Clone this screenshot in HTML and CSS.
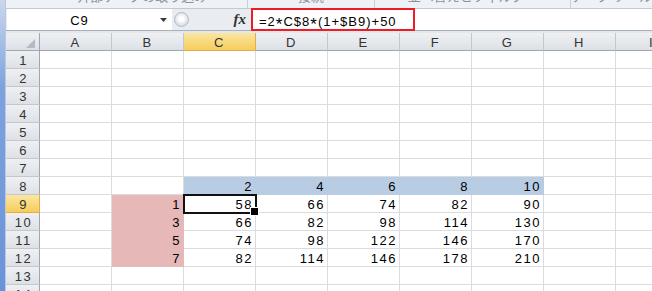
FILE: index.html
```html
<!DOCTYPE html>
<html lang="ja">
<head>
    <meta charset="UTF-8">
    <title>Book1 - Microsoft Excel</title>
    <link rel="stylesheet" href="styles.css">
</head>
<body>
    <div class="window">
        <div class="frame"></div>
        <div class="main">
            <!-- bottom edge of the ribbon, group labels cut off -->
            <div class="ribbon">
                <div class="group g1">外部データの取り込み</div>
                <div class="group g2">接続</div>
                <div class="group g3">並べ替えとフィルター</div>
                <div class="group g4">データ ツール</div>
            </div>

            <!-- formula bar -->
            <div class="formula-bar">
                <div class="name-box">
                    <span class="name">C9</span>
                    <svg class="arrow" width="7" height="4" viewBox="0 0 7 4"><polygon points="0,0 7,0 3.5,4" fill="#3a3a3a"/></svg>
                </div>
                <div class="knob"></div>
                <div class="fx">fx</div>
                <div class="field"><span class="formula">=2<span class="ast">*</span>C$8<span class="ast">*</span>(1+$B9)+50</span></div>
            </div>
            <div class="bar-gap"></div>

            <!-- sheet -->
            <div class="sheet" id="sheet"></div>
        </div>
    </div>

<script>
    var cols = ["A", "B", "C", "D", "E", "F", "G", "H", "I"];
    var values = {
        8:  [null, null, 2, 4, 6, 8, 10],
        9:  [null, 1, 58, 66, 74, 82, 90],
        10: [null, 3, 66, 82, 98, 114, 130],
        11: [null, 5, 74, 98, 122, 146, 170],
        12: [null, 7, 82, 114, 146, 178, 210]
    };
    var sheet = document.getElementById("sheet");

    function addCell(cls, text) {
        var div = document.createElement("div");
        div.className = cls;
        if (text != null) div.textContent = text;
        sheet.appendChild(div);
        return div;
    }

    // header row
    var corner = addCell("cell head corner");
    corner.innerHTML = '<svg width="9" height="9" viewBox="0 0 9 9"><polygon points="9,0 9,9 0,9" fill="#b4bac3"/></svg>';
    cols.forEach(function (c) {
        addCell("cell head col-head" + (c === "C" ? " on" : ""), c);
    });

    // rows
    for (var r = 1; r <= 14; r++) {
        addCell("cell head row-head" + (r === 9 ? " on" : ""), r);
        var row = values[r] || [];
        cols.forEach(function (c, i) {
            var cls = "cell";
            if (r === 8 && i >= 2 && i <= 6) cls += " blue";
            if (r >= 9 && r <= 12 && i === 1) cls += " pink";
            if (r === 9 && i === 2) cls += " active";
            addCell(cls, row[i]);
        });
    }
</script>
</body>
</html>
```

FILE: styles.css
```css
* {
    box-sizing: border-box;
}
body {
    margin: 0;
    width: 652px;
    height: 291px;
    overflow: hidden;
    background: #ffffff;
    font-family: "Liberation Sans", Arial, sans-serif;
    font-size: 13px;
    color: #000000;
}
.window {
    display: flex;
    height: 291px;
}
.frame {
    width: 6px;
    flex: none;
    background: linear-gradient(#cbd8ec, #7ea2de 30%, #6b93d8);
    border-right: 1px solid #b7c9e6;
}
.main {
    flex: 1;
    min-width: 0;
    overflow: hidden;
    display: flex;
    flex-direction: column;
}

/* ribbon edge */
.ribbon {
    height: 9px;
    flex: none;
    display: flex;
    align-items: flex-start;
    overflow: hidden;
    background: #eef1f5;
    border-bottom: 1px solid #c3c9d1;
    font-family: "Noto Sans CJK JP", sans-serif;
    font-size: 13px;
    color: #8d939b;
}
.group {
    height: 30px;
    margin-top: -11px;
    line-height: 14px;
    text-align: center;
    white-space: nowrap;
    border-right: 1px solid #c9cfd8;
}
.g1 {
    width: 257px;
    padding-left: 32px;
}
.g2 {
    width: 137px;
}
.g3 {
    width: 210px;
}
.g4 {
    flex: 1;
    border-right: none;
}

/* formula bar */
.formula-bar {
    height: 22px;
    flex: none;
    display: flex;
    background: #e9ecf0;
    border-bottom: 1px solid #a9b1bb;
}
.name-box {
    width: 165px;
    height: 21px;
    margin-left: 1px;
    display: flex;
    align-items: center;
    background: #ffffff;
}
.name {
    flex: 1;
    text-align: center;
    padding-right: 8px;
    padding-top: 1px;
    letter-spacing: 1px;
}
.arrow {
    margin-right: 5px;
}
.knob {
    width: 15px;
    height: 15px;
    margin: 3px 0 0 2px;
    border-radius: 50%;
    border: 1px solid #b3bac4;
    background: radial-gradient(circle at 50% 45%, #ffffff 20%, #d3d8df 80%);
}
.fx {
    width: 62px;
    padding-right: 5px;
    text-align: right;
    font-family: "Liberation Serif", serif;
    font-style: italic;
    font-weight: bold;
    font-size: 15px;
    line-height: 21px;
    color: #333333;
}
.field {
    flex: 1;
    height: 21px;
    background: #ffffff;
}
.formula {
    display: inline-block;
    width: 164px;
    height: 23px;
    margin-top: -1px;
    padding: 2px 0 0 6px;
    border: 2px solid #ee1c24;
    line-height: 19px;
    letter-spacing: 1px;
    white-space: nowrap;
}
.ast {
    font-size: 17px;
    position: relative;
    top: 4px;
    line-height: 0;
}
.bar-gap {
    height: 2px;
    flex: none;
    background: #e4e7eb;
}

/* sheet grid */
.sheet {
    display: grid;
    grid-template-columns: 34px repeat(9, 72px);
    grid-auto-rows: 18px;
}
.cell {
    border-right: 1px solid #dadcdd;
    border-bottom: 1px solid #dadcdd;
    padding: 3px 2px 0 0;
    line-height: 14px;
    text-align: right;
    letter-spacing: 1.5px;
    white-space: nowrap;
    overflow: hidden;
}
.head {
    background: linear-gradient(#eef0f3, #dde1e6);
    border-color: #c3c8cf;
    color: #333333;
    text-align: center;
    padding-right: 0;
}
.col-head {
    border-bottom-color: #9ea7b1;
}
.row-head {
    border-right-color: #9ea7b1;
    padding-left: 2px;
}
.corner {
    display: flex;
    justify-content: flex-end;
    align-items: flex-end;
    padding: 0 4px 2px 0;
    border-right-color: #9ea7b1;
    border-bottom-color: #9ea7b1;
}
.head.on {
    background: linear-gradient(#fbe6a0, #f6cd5c);
    border-color: #e8a94a;
}
.blue {
    background: #b8cce4;
    border-color: #b8cce4;
}
.pink {
    background: #e6b8b7;
    border-color: #e6b8b7;
}
.active {
    position: relative;
    z-index: 1;
    overflow: visible;
    outline: 2px solid #111111;
    outline-offset: -1px;
}
.active::after {
    content: "";
    position: absolute;
    right: -4px;
    bottom: -4px;
    width: 7px;
    height: 7px;
    background: #000000;
    border: 1px solid #ffffff;
}
```
